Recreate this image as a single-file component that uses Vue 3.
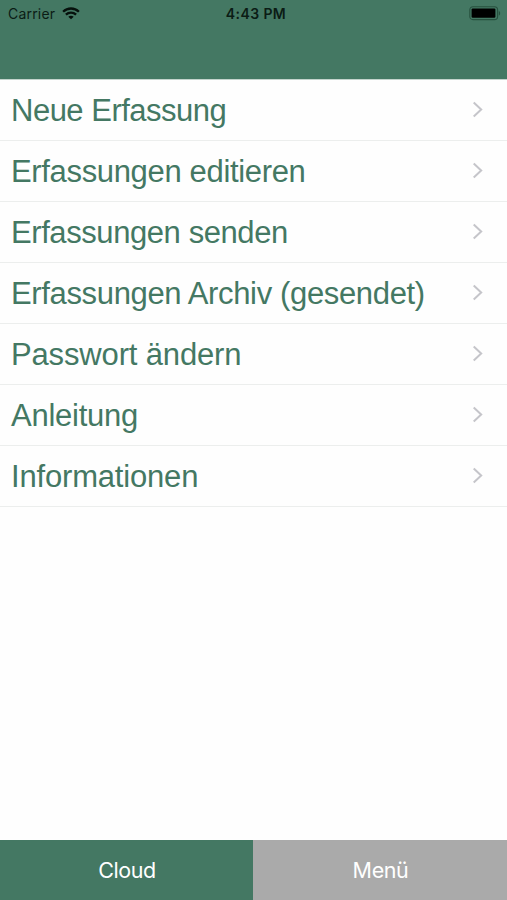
<script setup>
import { ref } from "vue";

// spacing: tracking of each title in px
const entries = ref([
  { id: "neu", title: "Neue Erfassung", spacing: -0.5 },
  { id: "edit", title: "Erfassungen editieren", spacing: -0.34 },
  { id: "senden", title: "Erfassungen senden", spacing: -0.42 },
  { id: "archiv", title: "Erfassungen Archiv (gesendet)", spacing: -0.35 },
  { id: "passwort", title: "Passwort ändern", spacing: -0.15 },
  { id: "anleitung", title: "Anleitung", spacing: -0.24 },
  { id: "info", title: "Informationen", spacing: -0.18 },
]);

const activeTab = ref("cloud");
</script>

<template>
  <div class="screen">
    <header class="header">
      <div class="status">
        <div class="carrier">
          <span>Carrier</span>
          <svg class="wifi" width="18" height="13" viewBox="0 0 18 13">
            <g fill="none" stroke="#06110c" stroke-width="2.3">
              <path d="M1.1 4.7C5.5 0.4 12.5 0.4 16.9 4.7" />
              <path d="M3.9 7.7C6.8 4.9 11.2 4.9 14.1 7.7" />
            </g>
            <path d="M9 12.3L6.3 9.8C7.8 8.4 10.2 8.4 11.7 9.8Z" fill="#06110c" />
          </svg>
        </div>
        <span class="time">4:43 PM</span>
        <div class="power">
          <svg width="32" height="15" viewBox="0 0 32 15">
            <rect x="0.8" y="0.8" width="27.8" height="12.8" rx="3.2" fill="none" stroke="#27513f" stroke-width="1.1" />
            <rect x="2.6" y="2.4" width="23.8" height="9.4" rx="1.2" fill="#000" />
            <path d="M29.8 5C31.6 5.6 31.6 9 29.8 9.6Z" fill="#27513f" />
          </svg>
        </div>
      </div>
    </header>

    <ul class="list">
      <li v-for="entry in entries" :key="entry.id" class="row">
        <span class="title" :style="{ letterSpacing: entry.spacing + 'px' }">{{ entry.title }}</span>
        <svg class="chevron" width="12" height="18" viewBox="0 0 12 18">
          <path d="M1.7 1.4L9.2 8.5L1.7 15.6" fill="none" stroke="#c5c5ca" stroke-width="2" />
        </svg>
      </li>
    </ul>

    <nav class="tabs">
      <button :class="{ active: activeTab === 'cloud' }" @click="activeTab = 'cloud'">Cloud</button>
      <button :class="{ active: activeTab === 'menu' }" @click="activeTab = 'menu'">Menü</button>
    </nav>
  </div>
</template>

<style>
body {
  margin: 0;
  background: #fff;
}
</style>

<style scoped>
.screen {
  display: flex;
  flex-direction: column;
  height: 900px;
  background: #fefefe;
  font-family: "Liberation Sans", Arial, sans-serif;
}
.header {
  box-sizing: border-box;
  height: 80px;
  background: #447863;
  border-bottom: 1px solid #c3d3cc;
}
.status {
  display: grid;
  grid-template-columns: 1fr auto 1fr;
  align-items: center;
  height: 27px;
  padding: 0 6px 0 8px;
  font-family: Inter, sans-serif;
  font-size: 14px;
  color: #0b1c15;
}
.carrier {
  display: flex;
  align-items: center;
  gap: 7px;
  letter-spacing: 0.2px;
}
.wifi {
  margin-bottom: 1px;
}
.time {
  padding-left: 3px;
  font-weight: 600;
  letter-spacing: 0.4px;
}
.power {
  display: flex;
  justify-content: flex-end;
}
.list {
  flex: 1;
  margin: 0;
  padding: 0;
  list-style: none;
}
.row {
  box-sizing: border-box;
  display: flex;
  align-items: center;
  justify-content: space-between;
  height: 61px;
  padding: 0 23px 0 11px;
  border-bottom: 1px solid #eceeed;
}
.title {
  padding-top: 2px;
  font-size: 31px;
  line-height: 58px;
  color: #447863;
}
.tabs {
  display: grid;
  grid-template-columns: 253px 1fr;
  height: 60px;
}
.tabs button {
  padding: 0 0 0 1px;
  border: 0;
  background: #aaa;
  color: #fff;
  font-family: Inter, sans-serif;
  font-size: 21.5px;
  letter-spacing: -0.4px;
}
.tabs button.active {
  background: #447863;
}
</style>
